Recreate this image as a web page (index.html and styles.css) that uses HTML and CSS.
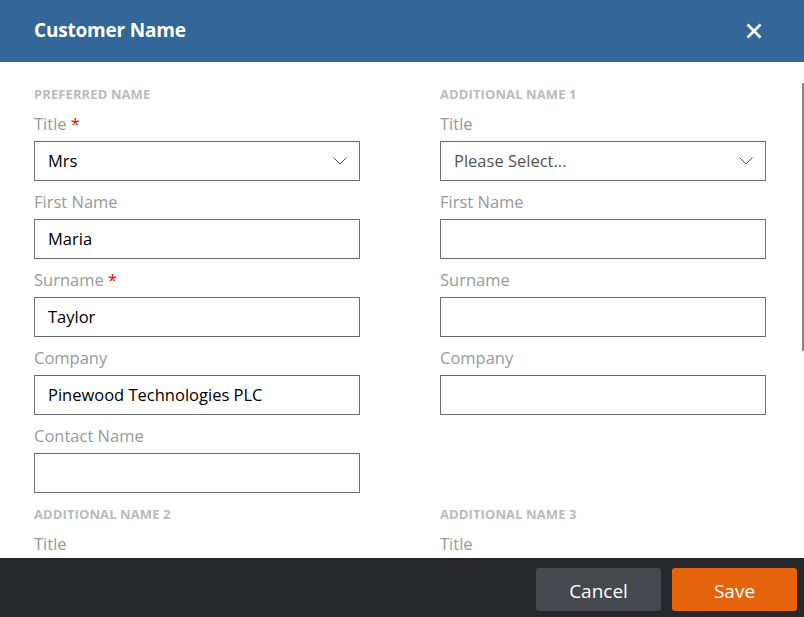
FILE: index.html
```html
<!DOCTYPE html>
<html>
	<head>
		<meta charset="utf-8">
		<link rel="stylesheet" href="styles.css">
		<title>Customer Name</title>
	</head>
	<body>
		<div class="dialog">
			<div class="header">
				<h1>Customer Name</h1>
				<svg class="close" width="16" height="16" viewBox="0 0 16 16">
					<path d="M1.5 1.5L14.5 14.5M14.5 1.5L1.5 14.5" stroke="#fff" stroke-width="2.6" fill="none"/>
				</svg>
			</div>
			<div class="content">
				<div class="sections">
					<div class="section">
						<h2>Preferred Name</h2>
						<div class="field">
							<label>Title <span class="req">*</span></label>
							<div class="box select">Mrs<svg class="chev" width="14" height="8" viewBox="0 0 14 8"><path d="M0.5 0.5L7 7L13.5 0.5" stroke="#555" stroke-width="1" fill="none"/></svg></div>
						</div>
						<div class="field">
							<label>First Name</label>
							<div class="box">Maria</div>
						</div>
						<div class="field">
							<label>Surname <span class="req">*</span></label>
							<div class="box">Taylor</div>
						</div>
						<div class="field">
							<label>Company</label>
							<div class="box">Pinewood Technologies PLC</div>
						</div>
						<div class="field">
							<label>Contact Name</label>
							<div class="box"></div>
						</div>
					</div>
					<div class="section">
						<h2>Additional Name 1</h2>
						<div class="field">
							<label>Title</label>
							<div class="box select placeholder">Please Select...<svg class="chev" width="14" height="8" viewBox="0 0 14 8"><path d="M0.5 0.5L7 7L13.5 0.5" stroke="#555" stroke-width="1" fill="none"/></svg></div>
						</div>
						<div class="field">
							<label>First Name</label>
							<div class="box"></div>
						</div>
						<div class="field">
							<label>Surname</label>
							<div class="box"></div>
						</div>
						<div class="field">
							<label>Company</label>
							<div class="box"></div>
						</div>
					</div>
					<div class="section">
						<h2>Additional Name 2</h2>
						<div class="field">
							<label>Title</label>
							<div class="box select"><svg class="chev" width="14" height="8" viewBox="0 0 14 8"><path d="M0.5 0.5L7 7L13.5 0.5" stroke="#555" stroke-width="1" fill="none"/></svg></div>
						</div>
					</div>
					<div class="section">
						<h2>Additional Name 3</h2>
						<div class="field">
							<label>Title</label>
							<div class="box select"><svg class="chev" width="14" height="8" viewBox="0 0 14 8"><path d="M0.5 0.5L7 7L13.5 0.5" stroke="#555" stroke-width="1" fill="none"/></svg></div>
						</div>
					</div>
				</div>
				<div class="scrollbar"></div>
			</div>
			<div class="footer">
				<button class="btn cancel">Cancel</button>
				<button class="btn save">Save</button>
			</div>
		</div>
	</body>
</html>
```

FILE: styles.css
```css
html, body {
	margin: 0;
	padding: 0;
	height: 100%;
}
body {
	font-family: "Open Sans", "Noto Sans", sans-serif;
	background-color: #fff;
	color: #000;
}
.dialog {
	display: flex;
	flex-direction: column;
	height: 100vh;
}
.header {
	flex: none;
	height: 62px;
	background-color: #336699;
	display: flex;
	align-items: center;
	justify-content: space-between;
	padding: 0 42px 0 34px;
}
.header h1 {
	margin: 0 0 2px 0;
	color: #fff;
	font-size: 19px;
	font-weight: 700;
	letter-spacing: -0.2px;
}
.close {
	display: block;
}
.content {
	flex: 1;
	position: relative;
	overflow: hidden;
}
.sections {
	display: grid;
	grid-template-columns: 326px 326px;
	column-gap: 80px;
	row-gap: 11px;
	padding: 22px 0 0 34px;
}
.section h2 {
	margin: 0 0 9px 0;
	font-size: 13px;
	line-height: 20px;
	font-weight: 700;
	color: #bbb;
	text-transform: uppercase;
	letter-spacing: 0.1px;
}
.field {
	margin-bottom: 10px;
}
.field:last-child {
	margin-bottom: 0;
}
.field label {
	display: block;
	font-size: 16.5px;
	line-height: 22px;
	color: #999;
	margin-bottom: 6px;
}
.req {
	color: #e00;
}
.box {
	box-sizing: border-box;
	height: 40px;
	border: 1px solid #6e6e6e;
	padding: 0 13px;
	font-size: 16.5px;
	line-height: 38px;
	color: #000;
	display: flex;
	align-items: center;
	justify-content: space-between;
}
.box.placeholder {
	color: #555;
}
.chev {
	display: block;
	margin-left: auto;
	margin-right: -1px;
}
.scrollbar {
	position: absolute;
	right: 0;
	top: 21px;
	width: 2px;
	height: 268px;
	background-color: #888;
}
.footer {
	flex: none;
	height: 59px;
	background-color: #25272b;
	display: flex;
	justify-content: flex-end;
	align-items: flex-start;
	gap: 11px;
	padding: 10px 7px 0 0;
	box-sizing: border-box;
}
.btn {
	width: 125px;
	height: 43px;
	border: none;
	border-radius: 3px;
	color: #fff;
	font-family: "Open Sans", "Noto Sans", sans-serif;
	font-size: 19px;
	padding: 2px 0 0 0;
	cursor: pointer;
}
.cancel {
	background-color: #45484d;
}
.save {
	background-color: #e5640b;
}
```
